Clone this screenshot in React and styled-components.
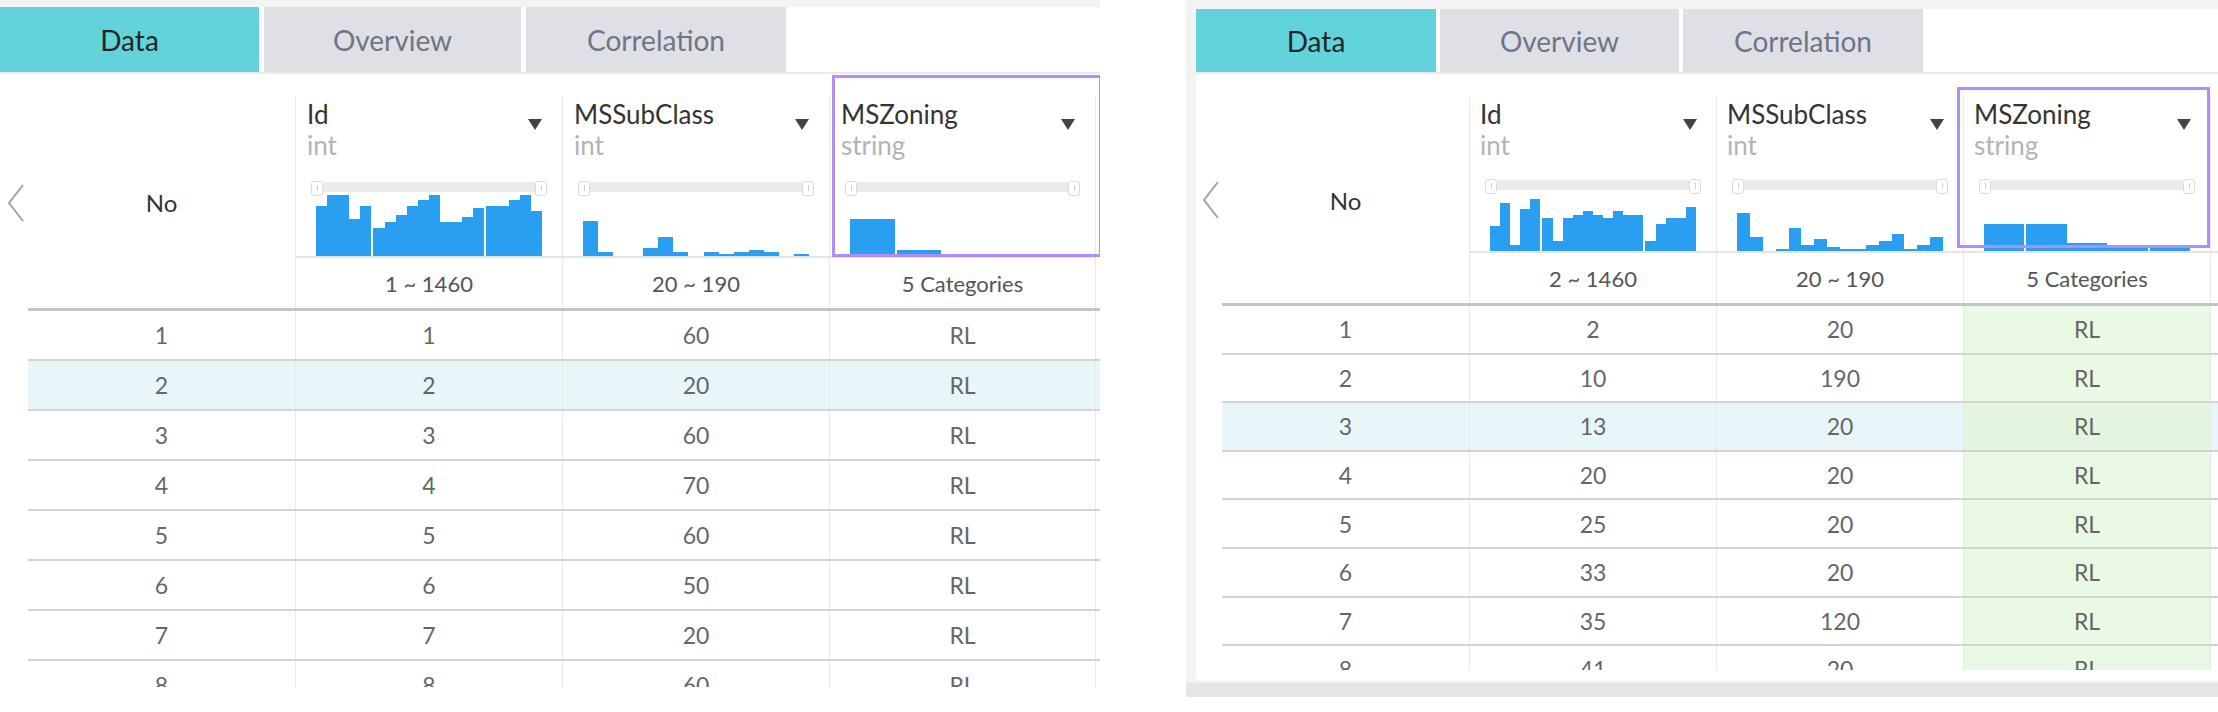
import React from "react";
import styled, { createGlobalStyle } from "styled-components";

const GlobalStyle = createGlobalStyle`
  html, body {
    margin: 0;
    padding: 0;
    background: #ffffff;
  }
  body {
    font-family: "Lato", "Open Sans", sans-serif;
    color: #333333;
  }
`;

const Page = styled.div`
  display: flex;
  align-items: flex-start;
  width: 2218px;
  height: 712px;
  overflow: hidden;
`;

const LeftShot = styled.div`
  flex: none;
  width: 1100px;
  height: 687px;
  box-sizing: border-box;
  border-top: 7px solid #f3f3f3;
  overflow: hidden;
`;

const Spacer = styled.div`
  flex: none;
  width: 86px;
`;

const RightShot = styled.div`
  flex: none;
  width: 1032px;
  box-sizing: border-box;
  padding: 9px 0 2px 10px;
  background: #f3f3f3;
  border-bottom: 14px solid #e6e6e6;
`;

const RightCard = styled.div`
  height: 672px;
  background: #ffffff;
  border-bottom-left-radius: 6px;
  overflow: hidden;
`;

const TabBar = styled.div`
  display: flex;
  gap: ${(p) => p.$gap}px;
  height: ${(p) => p.$h}px;
  border-bottom: 2px solid #e9e9e9;
`;

const Tab = styled.div`
  flex: none;
  width: ${(p) => p.$w}px;
  display: flex;
  align-items: center;
  justify-content: center;
  font-size: 28px;
  background: ${(p) => (p.$active ? "#62d3db" : "#dfe0e5")};
  color: ${(p) => (p.$active ? "#262626" : "#6e7587")};
`;

const Body = styled.div`
  display: flex;
  box-sizing: border-box;
  height: ${(p) => p.$h}px;
  padding-top: 23px;
  overflow: hidden;
`;

const Gutter = styled.div`
  flex: none;
  box-sizing: border-box;
  width: ${(p) => p.$w}px;
  height: ${(p) => p.$h}px;
  padding-left: ${(p) => p.$pad}px;
  display: flex;
  align-items: center;
`;

const Table = styled.div`
  flex: 1;
  min-width: 0;
`;

const Grid = styled.div`
  display: grid;
  grid-template-columns: repeat(${(p) => p.$cols}, ${(p) => p.$colW}px);
`;

const Head = styled(Grid)`
  grid-template-rows: auto ${(p) => p.$rangeH}px;
  border-bottom: 3px solid #c4c4c4;
`;

const NoHead = styled.div`
  grid-row: 1 / 3;
  grid-column: 1;
  display: flex;
  align-items: center;
  justify-content: center;
  font-size: 24px;
  color: #333333;
`;

const HeadCell = styled.div`
  position: relative;
  display: flex;
  flex-direction: column;
  border-left: 1px solid #e8e8e8;
  border-right: ${(p) => (p.$edge ? "1px solid #e8e8e8" : "none")};
  border-bottom: 2px solid #e5e5e5;
`;

const TitleRow = styled.div`
  display: flex;
  align-items: flex-start;
  justify-content: space-between;
  height: 32px;
  padding: 0 ${(p) => p.$padR}px 0 ${(p) => p.$padL}px;
`;

const Title = styled.span`
  font-size: 26px;
  line-height: 34px;
  color: #333333;
  white-space: nowrap;
`;

const Caret = styled.svg`
  flex: none;
  margin-top: 22px;
`;

const TypeLabel = styled.div`
  height: 32px;
  padding-left: ${(p) => p.$padL}px;
  font-size: 26px;
  line-height: 32px;
  color: #b3b3b3;
`;

const Slider = styled.div`
  display: flex;
  align-items: flex-start;
  margin-top: ${(p) => p.$top}px;
  padding: 0 15px;
`;

const Handle = styled.div`
  flex: none;
  box-sizing: border-box;
  width: 12px;
  height: 15px;
  padding-top: 3px;
  border: 1px solid #dadada;
  border-radius: 3px;
  background: #ffffff;
  display: flex;
  justify-content: center;

  &::after {
    content: "";
    width: 1px;
    height: 6px;
    background: #cfcfcf;
  }
`;

const Track = styled.div`
  flex: 1;
  height: 10px;
  margin-top: 1px;
  background: #ebebeb;
`;

const Hist = styled.div`
  display: flex;
  align-items: flex-end;
  height: ${(p) => p.$h}px;
  padding: 0 20px;
`;

const Bar = styled.div`
  flex: 1;
  margin-left: ${(p) => (p.$split ? 2 : 0)}px;
  background: #2a9ef0;
`;

const Focus = styled.div`
  position: absolute;
  inset: ${(p) => p.$inset};
  border: 3px solid #b28cf7;
  pointer-events: none;
`;

const RangeCell = styled.div`
  display: flex;
  align-items: center;
  justify-content: center;
  border-left: 1px solid #e8e8e8;
  border-right: ${(p) => (p.$edge ? "1px solid #e8e8e8" : "none")};
  font-size: 22px;
  color: #555555;
  white-space: nowrap;
`;

const Row = styled(Grid)`
  box-sizing: border-box;
  height: ${(p) => p.$h}px;
  border-bottom: 2px solid #d3d3d3;
  background: ${(p) => (p.$hl ? "#e6f6f9" : "transparent")};
`;

const Cell = styled.div`
  display: flex;
  align-items: center;
  justify-content: center;
  border-left: ${(p) => (p.$first ? "none" : "1px solid #e8e8e8")};
  border-right: ${(p) => (p.$edge ? "1px solid #e8e8e8" : "none")};
  background: ${(p) =>
    p.$green ? (p.$hl ? "#e3f5df" : "#eaf9e3") : "transparent"};
  font-size: 23px;
  color: #666666;
`;

function Chevron() {
  return (
    <svg width="18" height="38" viewBox="0 0 18 38">
      <polyline
        points="16,1 2,19 16,37"
        fill="none"
        stroke="#a3a3a3"
        strokeWidth="2"
      />
    </svg>
  );
}

function Histogram({ bars, splits = [], height }) {
  return (
    <Hist $h={height}>
      {bars.map((b, i) => (
        <Bar key={i} $split={splits.includes(i)} style={{ height: b }} />
      ))}
    </Hist>
  );
}

function Screen({ cfg }) {
  const headH = cfg.titleH + cfg.sliderTop + 15 + cfg.histH + 2 + cfg.rangeH;
  const n = cfg.columns.length + 1;
  return (
    <>
      <TabBar $gap={cfg.tabGap} $h={cfg.tabH}>
        {["Data", "Overview", "Correlation"].map((t, i) => (
          <Tab key={t} $w={cfg.tabW[i]} $active={i === 0}>
            {t}
          </Tab>
        ))}
      </TabBar>
      <Body $h={cfg.bodyH}>
        <Gutter $w={cfg.gutter} $pad={cfg.chevronPad} $h={headH}>
          <Chevron />
        </Gutter>
        <Table>
          <Head $cols={n} $colW={cfg.colW} $rangeH={cfg.rangeH}>
            <NoHead>No</NoHead>
            {cfg.columns.map((c) => (
              <HeadCell key={c.name} $edge={c.edge}>
                <TitleRow $padL={cfg.padL} $padR={cfg.padR}>
                  <Title>{c.name}</Title>
                  <Caret width="14" height="11" viewBox="0 0 14 11">
                    <polygon points="0,0 14,0 7,11" fill="#444444" />
                  </Caret>
                </TitleRow>
                <TypeLabel $padL={cfg.padL}>{c.type}</TypeLabel>
                <Slider $top={cfg.sliderTop}>
                  <Handle />
                  <Track />
                  <Handle />
                </Slider>
                <Histogram bars={c.bars} splits={c.splits} height={cfg.histH} />
                {c.focus && <Focus $inset={c.focus} />}
              </HeadCell>
            ))}
            {cfg.columns.map((c) => (
              <RangeCell key={c.name} $edge={c.edge}>
                {c.range}
              </RangeCell>
            ))}
          </Head>
          {cfg.rows.map((r, i) => (
            <Row
              key={i}
              $cols={n}
              $colW={cfg.colW}
              $h={cfg.rowH}
              $hl={cfg.highlight === i}
            >
              {r.map((v, j) => (
                <Cell
                  key={j}
                  $first={j === 0}
                  $edge={j > 0 && cfg.columns[j - 1].edge}
                  $green={j > 0 && cfg.columns[j - 1].green}
                  $hl={cfg.highlight === i}
                >
                  {v}
                </Cell>
              ))}
            </Row>
          ))}
        </Table>
      </Body>
    </>
  );
}

const leftCfg = {
  tabW: [259, 257, 260],
  tabGap: 5,
  tabH: 65,
  bodyH: 613,
  gutter: 28,
  chevronPad: 7,
  colW: 267,
  padL: 11,
  padR: 20,
  titleH: 64,
  sliderTop: 20,
  histH: 60,
  rangeH: 50,
  rowH: 50,
  highlight: 1,
  columns: [
    {
      name: "Id",
      type: "int",
      range: "1 ~ 1460",
      bars: [50, 61, 61, 37, 50, 28, 34, 41, 50, 56, 61, 34, 34, 39, 48, 50, 50, 56, 61, 45],
      splits: [5, 15]
    },
    {
      name: "MSSubClass",
      type: "int",
      range: "20 ~ 190",
      bars: [35, 4, 0, 0, 8, 19, 4, 0, 4, 2, 4, 6, 4, 0, 2]
    },
    {
      name: "MSZoning",
      type: "string",
      range: "5 Categories",
      bars: [37, 6, 2, 1, 1],
      splits: [1],
      edge: true,
      focus: "-22px -7px -1px 2px"
    }
  ],
  rows: [
    [1, 1, 60, "RL"],
    [2, 2, 20, "RL"],
    [3, 3, 60, "RL"],
    [4, 4, 70, "RL"],
    [5, 5, 60, "RL"],
    [6, 6, 50, "RL"],
    [7, 7, 20, "RL"],
    [8, 8, 60, "RL"]
  ]
};

const rightCfg = {
  tabW: [240, 239, 240],
  tabGap: 4,
  tabH: 63,
  bodyH: 596,
  gutter: 26,
  chevronPad: 6,
  colW: 247,
  padL: 10,
  padR: 19,
  titleH: 64,
  sliderTop: 18,
  histH: 57,
  rangeH: 50,
  rowH: 48.6,
  highlight: 2,
  columns: [
    {
      name: "Id",
      type: "int",
      range: "2 ~ 1460",
      bars: [25, 48, 6, 42, 52, 33, 10, 33, 36, 40, 36, 33, 40, 36, 36, 10, 27, 33, 33, 44],
      splits: [5, 15]
    },
    {
      name: "MSSubClass",
      type: "int",
      range: "20 ~ 190",
      bars: [38, 14, 0, 2, 23, 6, 12, 4, 2, 2, 6, 10, 17, 2, 6, 14]
    },
    {
      name: "MSZoning",
      type: "string",
      range: "5 Categories",
      bars: [27, 27, 8, 3, 3],
      splits: [1, 4],
      green: true,
      focus: "-10px 0px 3px -7px"
    },
    {
      name: "LotFrontage",
      type: "int",
      range: "21 ~ 313",
      bars: [6, 20, 44, 30, 12, 4, 2, 1, 0, 1]
    }
  ],
  rows: [
    [1, 2, 20, "RL", 80],
    [2, 10, 190, "RL", 50],
    [3, 13, 20, "RL", "NA"],
    [4, 20, 20, "RL", 70],
    [5, 25, 20, "RL", "NA"],
    [6, 33, 20, "RL", 85],
    [7, 35, 120, "RL", 60],
    [8, 41, 20, "RL", 84]
  ]
};

export default function App() {
  return (
    <>
      <GlobalStyle />
      <Page>
        <LeftShot>
          <Screen cfg={leftCfg} />
        </LeftShot>
        <Spacer />
        <RightShot>
          <RightCard>
            <Screen cfg={rightCfg} />
          </RightCard>
        </RightShot>
      </Page>
    </>
  );
}
